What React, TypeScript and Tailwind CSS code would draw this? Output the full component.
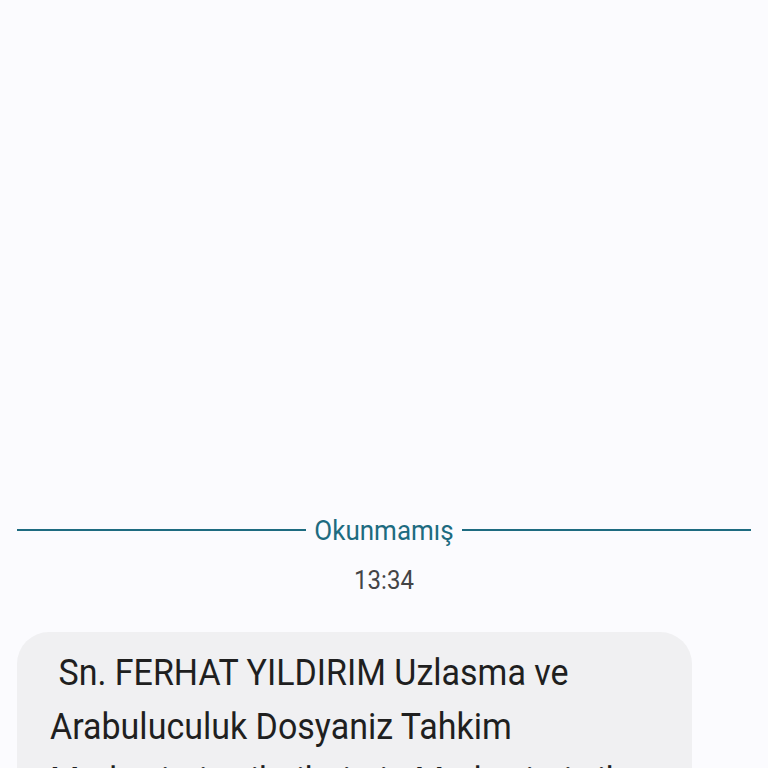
export default function App() {
  return (
    <div className="min-h-screen w-full bg-[#fbfbfe] flex flex-col" style={{ fontFamily: 'Roboto, "Noto Sans", sans-serif' }}>
      <div className="h-[512px] shrink-0" />
      {/* Unread divider */}
      <div className="flex items-center px-[17px] gap-2">
        <div className="flex-1 h-[2px] bg-[#1d6b80]" />
        <span className="text-[26px] leading-[36px] text-[#1d6b80] scale-y-[1.08]">Okunmamış</span>
        <div className="flex-1 h-[2px] bg-[#1d6b80]" />
      </div>
      <div className="text-center text-[24px] leading-[36px] text-[#444446] mt-[14px] scale-y-[1.1]">13:34</div>
      {/* Message bubble */}
      <div className="mt-[34px] ml-[17px] w-[675px] rounded-[32px] bg-[#f0f0f2] pl-[33px] pr-[50px] pt-[13px] pb-6">
        <p className="text-[34px] leading-[50px] text-[#1f1f1f] whitespace-pre-wrap origin-top scale-y-[1.08]">
          {' Sn. FERHAT YILDIRIM Uzlasma ve Arabuluculuk Dosyaniz Tahkim Merkezimize iletilmistir. Merkezimiz ile iletisime geciniz.'}
        </p>
      </div>
    </div>
  );
}
